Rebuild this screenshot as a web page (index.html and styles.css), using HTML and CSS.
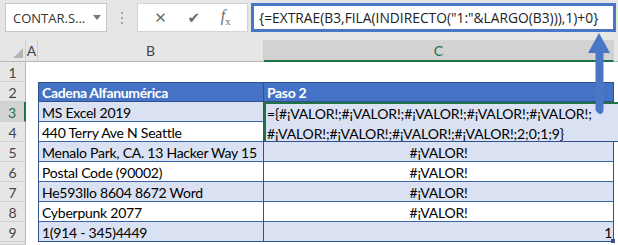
FILE: index.html
```html
<!DOCTYPE html>
<html>
<head>
  <title>Excel - EXTRAE</title>
  <link rel="stylesheet" href="styles.css">
</head>
<body>
  <div class="app">
    <div class="toolbar">
      <div class="namebox"><span>CONTAR.S...</span><span class="caret"></span></div>
      <div class="grip"><i></i><i></i><i></i></div>
      <div class="buttons">
        <span class="btn">&#x2715;</span>
        <span class="btn check">&#x2714;</span>
        <span class="btn fx"><i>f</i><sub>x</sub></span>
      </div>
      <div class="formula">{=EXTRAE(B3,FILA(INDIRECTO("1:"&amp;LARGO(B3))),1)+0}</div>
    </div>

    <div class="sheet">
      <!-- column headers -->
      <div class="corner"><span class="tri"></span></div>
      <div class="colhdr">A</div>
      <div class="colhdr">B</div>
      <div class="colhdr active">C</div>
      <div class="colhdr last"></div>

      <!-- row 1 -->
      <div class="rowhdr">1</div>
      <div class="cell"></div><div class="cell"></div><div class="cell"></div><div class="cell"></div>

      <!-- row 2 -->
      <div class="rowhdr">2</div>
      <div class="cell"></div>
      <div class="cell head first">Cadena Alfanumérica</div>
      <div class="cell head">Paso 2</div>
      <div class="cell"></div>

      <!-- row 3 / 4 -->
      <div class="rowhdr active">3</div>
      <div class="cell"></div>
      <div class="cell tb first band">MS Excel 2019</div>
      <div class="cell spill">={#¡VALOR!;#¡VALOR!;#¡VALOR!;#¡VALOR!;#¡VALOR!;<br>#¡VALOR!;#¡VALOR!;#¡VALOR!;#¡VALOR!;2;0;1;9}</div>

      <div class="rowhdr">4</div>
      <div class="cell"></div>
      <div class="cell tb first">440 Terry Ave N Seattle</div>

      <div class="rowhdr">5</div>
      <div class="cell"></div>
      <div class="cell tb first band">Menalo Park, CA. 13 Hacker Way 15</div>
      <div class="cell tb band center">#¡VALOR!</div>
      <div class="cell"></div>

      <div class="rowhdr">6</div>
      <div class="cell"></div>
      <div class="cell tb first">Postal Code (90002)</div>
      <div class="cell tb center">#¡VALOR!</div>
      <div class="cell"></div>

      <div class="rowhdr">7</div>
      <div class="cell"></div>
      <div class="cell tb first band">He593llo 8604 8672 Word</div>
      <div class="cell tb band center">#¡VALOR!</div>
      <div class="cell"></div>

      <div class="rowhdr">8</div>
      <div class="cell"></div>
      <div class="cell tb first">Cyberpunk 2077</div>
      <div class="cell tb center">#¡VALOR!</div>
      <div class="cell"></div>

      <div class="rowhdr">9</div>
      <div class="cell"></div>
      <div class="cell tb first band bottom">1(914 - 345)4449</div>
      <div class="cell tb band bottom right">1<span class="handle"></span></div>
      <div class="cell"></div>

      <div class="rowhdr"></div>
      <div class="cell"></div><div class="cell"></div><div class="cell"></div><div class="cell"></div>
    </div>

    <svg class="arrow" width="30" height="90" viewBox="0 0 30 90">
      <path d="M13 2 L2 22 L9.5 22 L9.5 79 Q12 83 14.5 83 Q17 83 17.5 79 L17.5 22 L24 22 Z" fill="#4a76c6"/>
    </svg>
  </div>
</body>
</html>
```

FILE: styles.css
```css
body {
  margin: 0;
  background: #fff;
  font-family: "Lato", "Liberation Sans", sans-serif;
}

.app {
  position: relative;
  width: 618px;
  height: 245px;
  overflow: hidden;
}

/* formula bar */
.toolbar {
  height: 40px;
  background: #e6e6e6;
  display: flex;
  align-items: flex-start;
  padding-top: 3px;
  box-sizing: border-box;
}

.namebox {
  margin-left: 5px;
  width: 102px;
  height: 29px;
  box-sizing: border-box;
  background: #fff;
  border: 1px solid #c6c6c6;
  display: flex;
  align-items: center;
  padding-left: 7px;
  font-family: "Open Sans", sans-serif;
  font-size: 13px;
  color: #333;
}

.caret {
  margin-left: 8px;
  border-left: 4px solid transparent;
  border-right: 4px solid transparent;
  border-top: 5px solid #777;
}

.grip {
  width: 30px;
  height: 29px;
  display: flex;
  flex-direction: column;
  align-items: center;
  justify-content: center;
  gap: 3px;
}

.grip i {
  width: 2px;
  height: 2px;
  background: #a6a6a6;
}

.buttons {
  width: 111px;
  height: 29px;
  box-sizing: border-box;
  background: #fff;
  border: 1px solid #d4d4d4;
  display: flex;
  align-items: center;
  justify-content: space-around;
  padding: 0 6px;
  color: #6d6d6d;
  font-family: "DejaVu Sans", sans-serif;
  font-size: 15px;
}

.btn.fx {
  font-family: "Liberation Serif", serif;
  font-size: 16px;
}

.btn.fx sub {
  font-size: 11px;
}

.formula {
  margin-left: 3px;
  width: 365px;
  height: 29px;
  box-sizing: border-box;
  border: 3px solid #4a76c6;
  background: #fff;
  padding-left: 5px;
  font-family: "Open Sans", sans-serif;
  font-size: 13.8px;
  line-height: 23px;
  color: #222;
  white-space: nowrap;
}

/* grid */
.sheet {
  display: grid;
  grid-template-columns: 26px 12px 226px 350px 4px;
  grid-template-rows: 22px repeat(9, 20px) 3px;
  font-size: 14px;
  color: #000;
}

.corner, .colhdr {
  background: #e6e6e6;
  border-right: 1px solid #cfcfcf;
  border-bottom: 1px solid #b8b8b8;
  box-sizing: border-box;
  text-align: center;
  line-height: 22px;
  color: #444;
  font-size: 14px;
  position: relative;
}

.colhdr.active {
  background: #d2d2d2;
  color: #217346;
  border-bottom: 2px solid #217346;
}

.colhdr.last {
  border-right: none;
}

.tri {
  position: absolute;
  right: 2px;
  bottom: 3px;
  border-left: 10px solid transparent;
  border-bottom: 10px solid #b5b5b5;
}

.rowhdr {
  background: #e6e6e6;
  border-right: 1px solid #b8b8b8;
  border-bottom: 1px solid #d0d0d0;
  box-sizing: border-box;
  text-align: center;
  padding-top: 1px;
  line-height: 19px;
  color: #444;
  font-size: 14px;
}

.rowhdr.active {
  background: #d2d2d2;
  color: #217346;
  border-right: 2px solid #217346;
}

.cell {
  box-sizing: border-box;
  padding: 2px 3px 0;
  line-height: 17px;
  white-space: nowrap;
  letter-spacing: -0.25px;
}

.head {
  background: #4472c4;
  color: #fff;
  font-weight: bold;
  border-top: 1px solid #2f528f;
  border-right: 1px solid #2f528f;
  border-bottom: 1px solid #2f528f;
  padding-top: 1px;
  letter-spacing: -0.35px;
}

.head.first, .tb.first {
  border-left: 1px solid #2f528f;
}

.tb {
  border-right: 1px solid #2f528f;
  border-bottom: 1px solid #3b62a8;
}

.band {
  background: #d9e1f2;
}

.center {
  text-align: center;
}

.right {
  text-align: right;
  position: relative;
  padding-right: 1px;
}

.bottom {
  border-bottom: 1px solid #2f528f;
}

.spill {
  grid-column: 4 / span 2;
  grid-row: span 2;
  background: #d9e1f2;
  border-top: 2px solid #217346;
  border-left: 2px solid #217346;
  border-bottom: 1px solid #2f528f;
  line-height: 20px;
  padding: 0 0 0 1px;
  letter-spacing: -0.12px;
}

.handle {
  position: absolute;
  right: -2px;
  bottom: -2px;
  width: 4px;
  height: 4px;
  background: #2f528f;
}

.arrow {
  position: absolute;
  left: 586px;
  top: 31px;
}
```
